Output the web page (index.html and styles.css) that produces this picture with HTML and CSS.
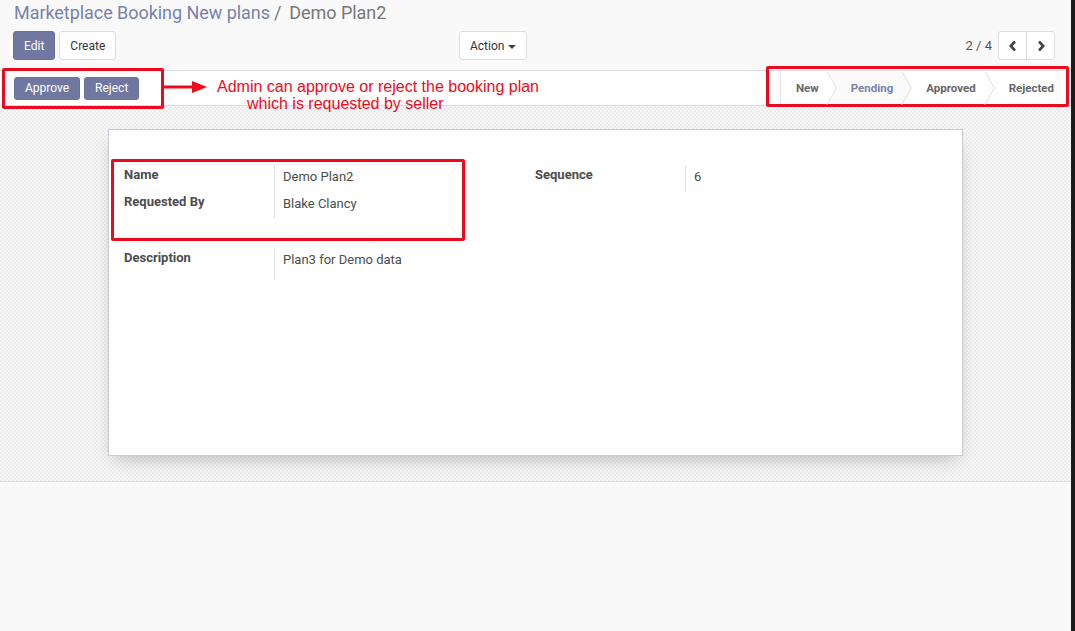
FILE: index.html
```html
<!DOCTYPE html>
<html>
<head>
<meta charset="utf-8">
<link rel="stylesheet" href="styles.css">
</head>
<body>
<div class="app">
  <div class="main">
    <div class="cp">
      <div class="crumbs"><span class="crumb-link">Marketplace Booking New plans</span><span class="crumb-sep">/</span><span class="crumb-cur">Demo Plan2</span></div>
      <div class="cp-row">
        <div class="cp-buttons">
          <button class="btn btn-primary">Edit</button>
          <button class="btn btn-default">Create</button>
        </div>
        <div class="cp-sidebar">
          <button class="btn btn-default">Action <span class="caret"></span></button>
        </div>
        <div class="cp-pager">
          <span class="pager-value">2 / 4</span>
          <div class="pager-btns">
            <button class="btn btn-default pbtn"><svg width="10" height="12" viewBox="0 0 10 12"><polyline points="7,1.5 2.8,6 7,10.5" fill="none" stroke="#444" stroke-width="2.6"/></svg></button>
            <button class="btn btn-default pbtn"><svg width="10" height="12" viewBox="0 0 10 12"><polyline points="3,1.5 7.2,6 3,10.5" fill="none" stroke="#444" stroke-width="2.6"/></svg></button>
          </div>
        </div>
      </div>
    </div>
    <div class="statusbar">
      <div class="sb-buttons">
        <button class="btn btn-primary btn-sm">Approve</button>
        <button class="btn btn-primary btn-sm">Reject</button>
      </div>
      <div class="stages">
        <span class="stage first">New</span>
        <span class="stage active">Pending</span>
        <span class="stage">Approved</span>
        <span class="stage last">Rejected</span>
      </div>
    </div>
    <div class="sheet-bg">
      <div class="sheet">
        <div class="groups">
          <div class="group">
            <div class="frow"><div class="flabel">Name</div><div class="fval">Demo Plan2</div></div>
            <div class="frow"><div class="flabel">Requested By</div><div class="fval">Blake Clancy</div></div>
          </div>
          <div class="group">
            <div class="frow"><div class="flabel">Sequence</div><div class="fval">6</div></div>
          </div>
        </div>
        <div class="group single">
          <div class="frow tall"><div class="flabel">Description</div><div class="fval">Plan3 for Demo data</div></div>
        </div>
      </div>
    </div>
    <div class="bottom"></div>

    <div class="redbox rb-buttons"></div>
    <div class="redbox rb-stages"></div>
    <div class="redbox rb-fields"></div>
    <svg class="arrow" width="50" height="16" viewBox="0 0 50 16"><line x1="0" y1="8" x2="32" y2="8" stroke="#ee0a1e" stroke-width="3"/><polygon points="30,2 45,8 30,14" fill="#ee0a1e"/></svg>
    <div class="note"><div>Admin can approve or reject the booking plan</div><div class="note2">which is requested by seller</div></div>
  </div>
  <div class="edge"></div>
</div>
</body>
</html>
```

FILE: styles.css
```css
* { box-sizing: border-box; }
html, body { margin: 0; padding: 0; }
body {
  font-family: Roboto, "Liberation Sans", sans-serif;
  font-size: 13px;
  color: #4c4c4c;
  background: #f9f9f9;
}
.app { display: flex; height: 631px; overflow: hidden; }
.main { position: relative; flex: 1; background: #f9f9f9; display: flex; flex-direction: column; }
.edge { width: 4px; background: #1c1c1c; }

.cp { padding: 2px 16px 0 13px; height: 70px; }
.crumbs { font-size: 18px; line-height: 21px; padding-left: 1px; white-space: nowrap; letter-spacing: -0.05px; }
.crumb-link { color: #7882ab; }
.crumb-sep { color: #777; margin: 0 8px 0 4px; }
.crumb-cur { color: #777; }
.cp-row { display: flex; align-items: center; margin-top: 8px; }
.cp-buttons { display: flex; gap: 4px; width: 446px; }
.cp-sidebar { flex: 1; }
.cp-pager { display: flex; align-items: center; gap: 6px; }
.pager-value { color: #555; font-size: 13px; }
.pager-btns { display: flex; }
.pager-btns .pbtn { width: 29px; padding: 0; display: flex; align-items: center; justify-content: center; }
.pager-btns .pbtn + .pbtn { margin-left: -1px; }
.pager-btns .pbtn:first-child { border-radius: 3px 0 0 3px; }
.pager-btns .pbtn:last-child { border-radius: 0 3px 3px 0; }

.btn {
  font-family: inherit;
  font-size: 12px;
  line-height: 18px;
  height: 29px;
  padding: 5px 10px;
  border-radius: 3px;
  border: 1px solid transparent;
  cursor: pointer;
}
.btn-primary { background: #7078a2; color: #fff; border-color: #6a729b; }
.btn-default { background: #fff; color: #333; border-color: #dcdcdc; }
.btn-sm { height: 23px; padding: 2px 10px; line-height: 17px; font-size: 12px; }
.caret { display: inline-block; width: 0; height: 0; border-left: 4px solid transparent; border-right: 4px solid transparent; border-top: 4px solid #444; vertical-align: middle; margin-left: 1px; }

.statusbar {
  height: 36px;
  background: #fff;
  border-top: 1px solid #dcdcdc;
  border-bottom: 1px solid #dcdcdc;
  display: flex;
  align-items: center;
  justify-content: space-between;
  padding: 0 5px 0 14px;
}
.sb-buttons { display: flex; gap: 4px; }
.stages { display: flex; height: 100%; border-left: 1px solid #e4e4e4; }
.stage {
  position: relative;
  display: flex;
  align-items: center;
  font-size: 11.5px;
  font-weight: 700;
  color: #666;
  padding: 0 9px 0 24px;
  background: #fff;
}
.stage.first { padding-left: 15px; padding-right: 8px; }
.stage.last { padding-right: 12px; }
.stage.active { color: #7882ab; background: #fafafa; }
.stage:not(.last)::after,
.stage:not(.last)::before {
  content: "";
  position: absolute;
  top: 0;
  right: -10px;
  width: 0; height: 0;
  border-top: 17px solid transparent;
  border-bottom: 17px solid transparent;
  border-left: 10px solid #dedede;
  z-index: 2;
}
.stage:not(.last)::after { right: -9px; border-left-color: #fff; z-index: 3; }
.stage.active::after { border-left-color: #fafafa; }

.sheet-bg {
  height: 376px;
  background-color: #f3f3f3;
  background-image: repeating-conic-gradient(#ececec 0 25%, #f8f8f8 0 50%);
  background-size: 4px 4px;
  padding-top: 23px;
  border-bottom: 1px solid #dcdcdc;
}
.sheet {
  width: 855px;
  height: 327px;
  margin: 0 0 0 108px;
  background: #fff;
  border: 1px solid #c9c9d3;
  box-shadow: 0 8px 18px -6px rgba(0,0,0,0.25);
  padding: 35px 16px 0 15px;
}
.groups { display: flex; }
.group { width: 411px; }
.single { margin-top: 29px; }
.frow { display: flex; height: 27px; }
.frow.tall { height: 32px; }
.flabel { width: 150px; font-weight: 700; padding-top: 3px; line-height: 13px; color: #4c4c4c; }
.fval { border-left: 1px solid #e2e2e2; padding: 5px 0 0 8px; line-height: 13px; color: #4c4c4c; }

.bottom { flex: 1; background: #f9f9f9; }

.redbox { position: absolute; border: 3px solid #ee0a1e; border-radius: 2px; pointer-events: none; }
.rb-buttons { left: 2px; top: 68px; width: 162px; height: 41px; }
.rb-stages { left: 766px; top: 66px; width: 303px; height: 41px; }
.rb-fields { left: 111px; top: 159px; width: 354px; height: 82px; }
.arrow { position: absolute; left: 162px; top: 79px; }
.note {
  position: absolute;
  left: 217px;
  top: 78px;
  font-family: "Liberation Sans", Arial, sans-serif;
  font-size: 16px;
  line-height: 17px;
  color: #ee0a1e;
  white-space: nowrap;
}
.note2 { padding-left: 30px; }
```
